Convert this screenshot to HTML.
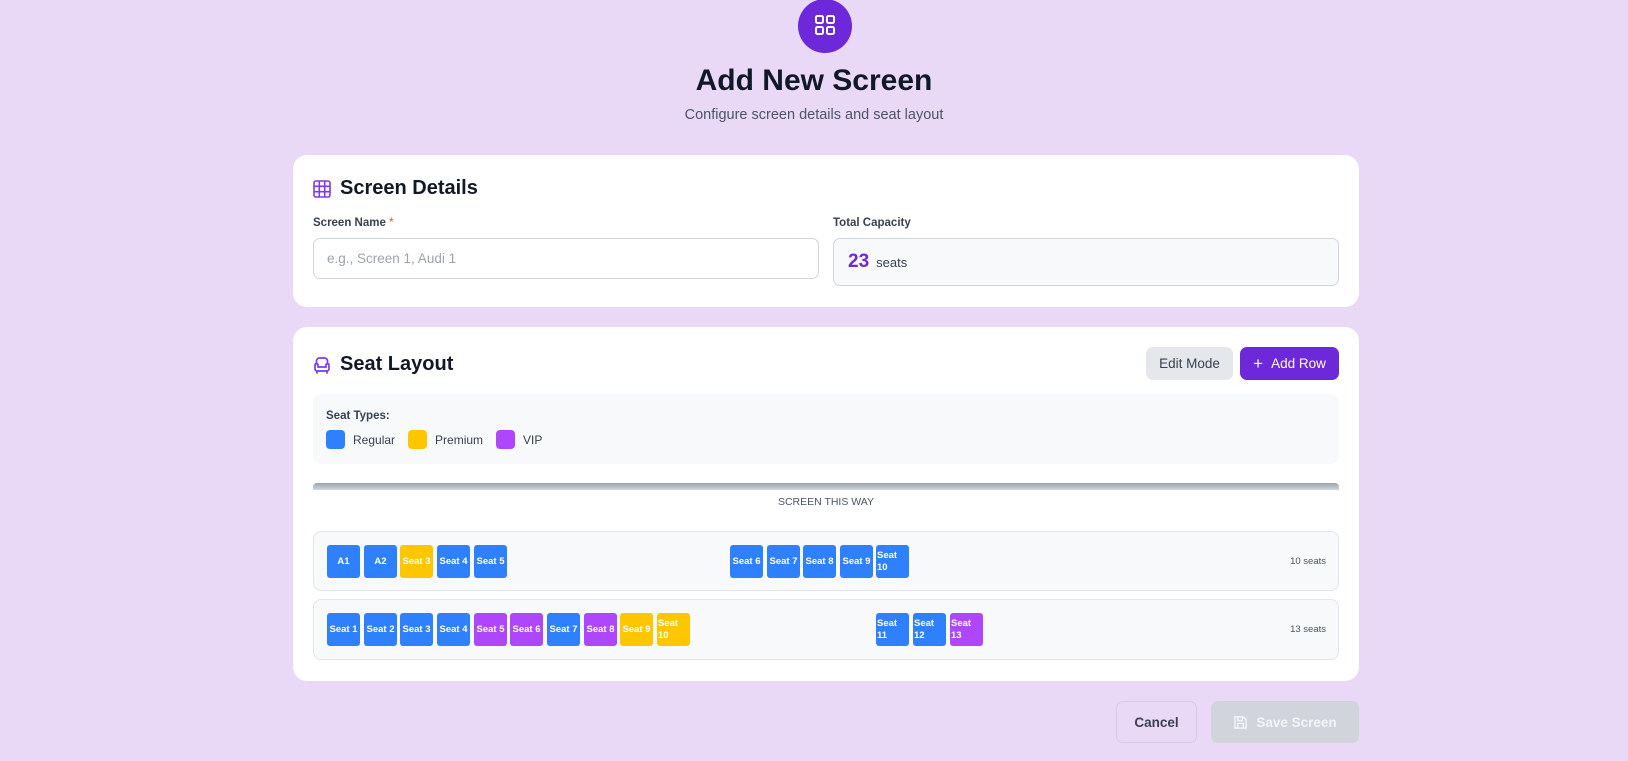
<!DOCTYPE html>
<html><head><meta charset="utf-8"><style>
*{box-sizing:border-box;margin:0;padding:0}
body{width:1628px;height:761px;background:#e9d9f7;font-family:"Liberation Sans",sans-serif;position:relative;overflow:hidden;color:#111827}
.a{position:absolute}
.card{position:absolute;background:#fff;border-radius:14px;left:293px;width:1066px}
.h{font-size:20px;font-weight:bold;color:#111827;display:flex;align-items:center;gap:9px}
.lbl{font-size:11.5px;font-weight:bold;color:#374151}
.seat{position:absolute;width:33px;height:33px;border-radius:3px;color:#fff;font-size:9.5px;font-weight:bold;display:flex;align-items:center;justify-content:center;line-height:12px;text-align:center}
.seat.w{justify-content:flex-start;text-align:left;padding-left:1px}
.b{background:#2f80fc}.y{background:#fdc700}.p{background:#ae47fb}
.row{position:absolute;left:313px;width:1026px;background:#f8f9fb;border:1px solid #e3e5ea;border-radius:8px}
.cnt{position:absolute;right:12px;font-size:9.5px;color:#4b5563}
</style></head><body>
<div class="a" style="left:798px;top:-1px;width:54px;height:54px;border-radius:50%;background:#6d28d9"></div>
<svg class="a" style="left:814px;top:14px" width="22" height="22" viewBox="0 0 22 22" fill="none" stroke="#fff" stroke-width="2"><rect x="2" y="2" width="7" height="7" rx="1.5"/><rect x="13" y="2" width="7" height="7" rx="1.5"/><rect x="2" y="13" width="7" height="7" rx="1.5"/><rect x="13" y="13" width="7" height="7" rx="1.5"/></svg>
<div class="a" style="left:0;width:1628px;top:64px;text-align:center;font-size:30px;font-weight:bold;color:#111827">Add New Screen</div>
<div class="a" style="left:0;width:1628px;top:107px;text-align:center;font-size:14.5px;color:#4b5563">Configure screen details and seat layout</div>

<div class="card" style="top:155px;height:152px">
 <div class="h a" style="left:20px;top:22px"><svg width="18" height="18" viewBox="0 0 18 18" fill="none" stroke="#7c3aed" stroke-width="1.6"><rect x="1" y="1" width="16" height="16" rx="2"/><path d="M6.3 1v16M11.7 1v16M1 6.3h16M1 11.7h16"/></svg>Screen Details</div>
 <div class="lbl a" style="left:20px;top:62px">Screen Name <span style="color:#ef4444;font-weight:normal">*</span></div>
 <div class="a" style="left:20px;top:83px;width:506px;height:41px;border:1px solid #d1d5db;border-radius:7px;font-size:13.5px;color:#9ca3af;padding:12px 13px">e.g., Screen 1, Audi 1</div>
 <div class="lbl a" style="left:540px;top:62px">Total Capacity</div>
 <div class="a" style="left:540px;top:83px;width:506px;height:48px;border:1px solid #d1d5db;border-radius:7px;background:#f8f9fb;padding:12px 14px;display:flex;align-items:baseline;gap:7px"><span style="font-size:19px;font-weight:bold;color:#6d28d9">23</span><span style="font-size:13px;color:#374151">seats</span></div>
</div>

<div class="card" style="top:327px;height:354px">
 <div class="h a" style="left:20px;top:26px"><svg width="18" height="18" viewBox="0 0 18 18" fill="none" stroke="#7c3aed" stroke-width="1.7" stroke-linecap="round"><path d="M3.5 8V5a3 3 0 0 1 3-3h5a3 3 0 0 1 3 3v3"/><path d="M2 9a1.5 1.5 0 0 1 3 0v2h8V9a1.5 1.5 0 0 1 3 0v4a2 2 0 0 1-2 2H4a2 2 0 0 1-2-2z"/><path d="M4 15v2M14 15v2"/></svg>Seat Layout</div>
 <div class="a" style="left:853px;top:20px;width:87px;height:33px;border-radius:7px;background:#e5e7eb;color:#374151;font-size:13.5px;display:flex;align-items:center;justify-content:center">Edit Mode</div>
 <div class="a" style="left:947px;top:20px;width:99px;height:33px;border-radius:7px;background:#6d28d9;color:#fff;font-size:13.5px;display:flex;align-items:center;justify-content:center;gap:8px"><span style="font-size:17px;font-weight:300">+</span>Add Row</div>
 <div class="a" style="left:20px;top:67px;width:1026px;height:70px;background:#f8f9fb;border-radius:8px">
  <div class="lbl a" style="left:13px;top:16px">Seat Types:</div>
  <div class="a" style="left:13px;top:36px;display:flex;align-items:center;font-size:12px;color:#374151">
   <span style="width:19px;height:19px;border-radius:4px;background:#2f80fc;margin-right:8px"></span>Regular
   <span style="width:19px;height:19px;border-radius:4px;background:#fdc700;margin:0 8px 0 13px"></span>Premium
   <span style="width:19px;height:19px;border-radius:4px;background:#ae47fb;margin:0 8px 0 13px"></span>VIP
  </div>
 </div>
 <div class="a" style="left:20px;top:156px;width:1026px;height:7px;border-radius:4px 4px 0 0;background:linear-gradient(#9ca3af,#d1d5db)"></div>
 <div class="a" style="left:20px;width:1026px;top:169px;text-align:center;font-size:10.5px;color:#4b5563">SCREEN THIS WAY</div>
</div>

<div class="row" style="top:531px;height:60px"><div class="cnt" style="top:24px">10 seats</div></div>
<div class="row" style="top:599px;height:61px"><div class="cnt" style="top:24px">13 seats</div></div>

<div class="seat b" style="left:327px;top:545px">A1</div>
<div class="seat b" style="left:364px;top:545px">A2</div>
<div class="seat y" style="left:400px;top:545px">Seat 3</div>
<div class="seat b" style="left:437px;top:545px">Seat 4</div>
<div class="seat b" style="left:474px;top:545px">Seat 5</div>
<div class="seat b" style="left:730px;top:545px">Seat 6</div>
<div class="seat b" style="left:767px;top:545px">Seat 7</div>
<div class="seat b" style="left:803px;top:545px">Seat 8</div>
<div class="seat b" style="left:840px;top:545px">Seat 9</div>
<div class="seat b w" style="left:876px;top:545px">Seat<br>10</div>

<div class="seat b" style="left:327px;top:613px">Seat 1</div>
<div class="seat b" style="left:364px;top:613px">Seat 2</div>
<div class="seat b" style="left:400px;top:613px">Seat 3</div>
<div class="seat b" style="left:437px;top:613px">Seat 4</div>
<div class="seat p" style="left:474px;top:613px">Seat 5</div>
<div class="seat p" style="left:510px;top:613px">Seat 6</div>
<div class="seat b" style="left:547px;top:613px">Seat 7</div>
<div class="seat p" style="left:584px;top:613px">Seat 8</div>
<div class="seat y" style="left:620px;top:613px">Seat 9</div>
<div class="seat y w" style="left:657px;top:613px">Seat<br>10</div>
<div class="seat b w" style="left:876px;top:613px">Seat<br>11</div>
<div class="seat b w" style="left:913px;top:613px">Seat<br>12</div>
<div class="seat p w" style="left:950px;top:613px">Seat<br>13</div>

<div class="a" style="left:1116px;top:701px;width:81px;height:42px;border:1px solid #d8c8ee;border-radius:7px;font-size:13.5px;font-weight:bold;color:#374151;display:flex;align-items:center;justify-content:center">Cancel</div>
<div class="a" style="left:1211px;top:701px;width:148px;height:42px;background:#d1d5db;border-radius:7px;font-size:13.5px;font-weight:bold;color:#f3f4f6;display:flex;align-items:center;justify-content:center;gap:8px"><svg width="15" height="15" viewBox="0 0 16 16" fill="none" stroke="#f3f4f6" stroke-width="1.5"><path d="M2 2h9l3 3v9H2z"/><path d="M5 2v4h5V2M5 14V9h6v5"/></svg>Save Screen</div>
</body></html>
